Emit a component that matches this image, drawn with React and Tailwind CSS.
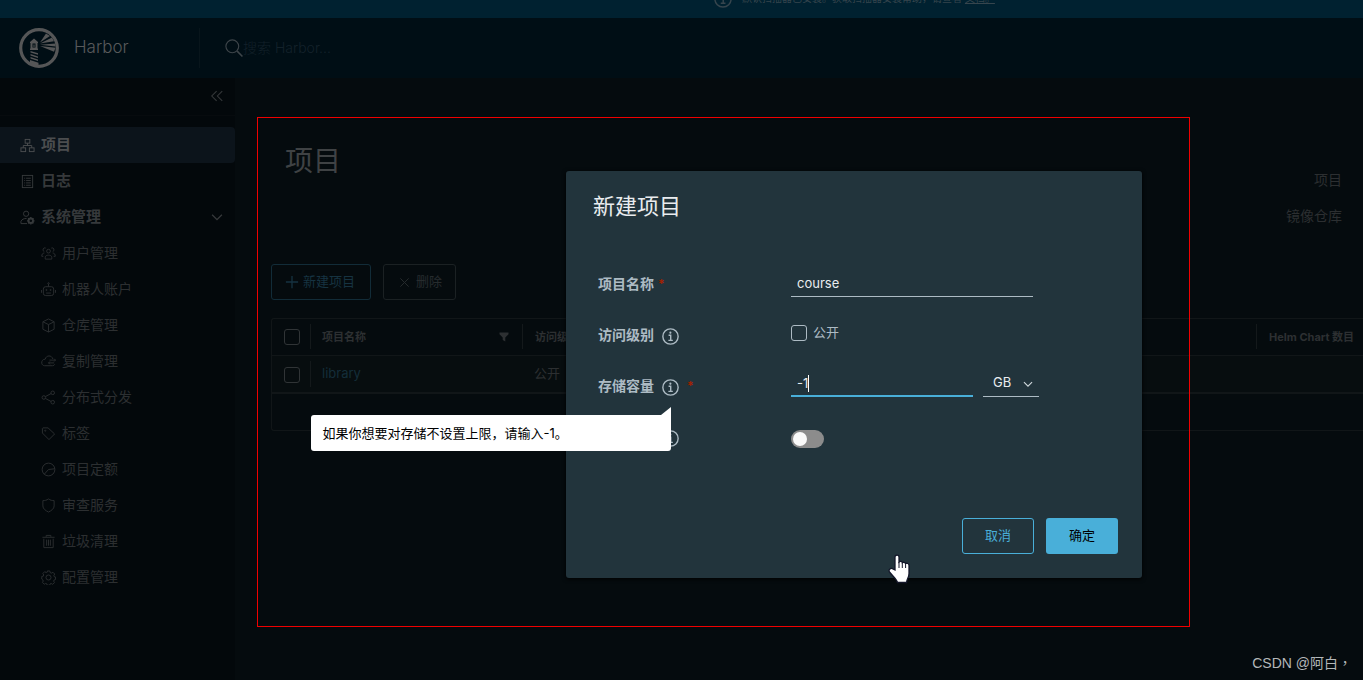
import React, { useState } from "react";

const ICONS = {
    info: (
        <>
            <circle cx="8" cy="8" r="7.2" strokeWidth="1.3" />
            <path d="M6.2 6.8h2v4.8M6 11.7h4.2" strokeWidth="1.3" />
            <circle cx="7.9" cy="4.4" r="0.5" fill="currentColor" />
        </>
    ),
    projects: (
        <>
            <rect x="5.5" y="1.5" width="5" height="4" />
            <rect x="1" y="10.5" width="5" height="4" />
            <rect x="10" y="10.5" width="5" height="4" />
            <path d="M8 5.5v2.5M3.5 10.5V8h9v2.5" />
        </>
    ),
    logs: (
        <>
            <rect x="2.5" y="1.5" width="11" height="13" />
            <path d="M4.5 4.5h1M6.500 4.500h5M4.500 7h1M6.500 7h5M4.500 9.500h1M6.500 9.500h5M4.500 12h1M6.500 12h5" />
        </>
    ),
    admin: (
        <>
            <circle cx="6.5" cy="4" r="2.8" />
            <path d="M7.5 14.5H1V12c1-2 3-3 6-3" />
            <circle cx="11.5" cy="11.5" r="2.4" strokeWidth="2" />
            <path d="M11.5 7.500v1.500M11.500 14v1.500M7.500 11.500H9M14 11.500h1.500M8.700 8.700l1 1M13.300 13.300l1 1M14.300 8.700l-1 1M9.700 13.300l-1 1" strokeWidth="1.4" />
        </>
    ),
    users: (
        <>
            <circle cx="8" cy="5.500" r="2" />
            <path d="M4.500 14v-2c0-3 7-3 7 0v2z" />
            <path d="M5 2.200a2 2 0 1 0-1.500 3.700M11 2.200a2 2 0 1 1 1.500 3.700M3.500 7.500C1.500 7.500.8 9 .8 11H2.500M12.500 7.500c2 0 2.700 1.500 2.700 3.500H13.500" />
        </>
    ),
    robot: (
        <>
            <rect x="2.5" y="5" width="11" height="9.500" rx="2.500" />
            <path d="M8 5V2M.5 8.500v3M15.500 8.500v3M5.500 11.800h5" />
            <circle cx="8" cy="1.500" r="0.800" />
            <circle cx="5.800" cy="8.500" r="0.600" />
            <circle cx="10.200" cy="8.500" r="0.600" />
        </>
    ),
    registry: <path d="M8 1l6 3v8l-6 3-6-3V4zM2 4l6 3 6-3M8 7v8" />,
    replication: (
        <>
            <path d="M12.500 5.200C11.500 1 5.500 1 4.500 5.500 1.500 5.500.5 8 .8 9.800c.3 1.700 1.500 2.700 3 2.700h8.500c1.200 0 2-.7 2.300-1.500" />
            <path d="M9 6.500h6.500M14 5l1.500 1.500L14 8M14 9.500H8M9.500 8L8 9.500 9.500 11" />
        </>
    ),
    distribution: (
        <>
            <circle cx="3" cy="8" r="1.900" />
            <circle cx="12.500" cy="3" r="1.900" />
            <circle cx="12.500" cy="13" r="1.900" />
            <path d="M4.700 7l6-3.200M4.700 9l6 3.200" />
        </>
    ),
    tag: (
        <>
            <path d="M1.500 2.500v5l7 7 6-6-7-6.500H2z" />
            <circle cx="4.500" cy="5" r="0.600" />
        </>
    ),
    quota: (
        <>
            <circle cx="8" cy="8" r="6.800" />
            <path d="M3.500 13L8 8l6.800-.8" />
        </>
    ),
    shield: <path d="M8 1c2 1.500 4 1.800 6 1.800v5.700c0 3-3 5-6 6.500-3-1.500-6-3.500-6-6.500V2.800C4 2.800 6 2.500 8 1z" />,
    trash: <path d="M1.500 3.500h13M5.500 3V1.500h5V3M3 5v9.500h10V5M6 6v6.500M8 6v6.500M10 6v6.500" />,
    config: (
        <>
            <circle cx="8" cy="8" r="2.700" />
            <path d="M6.700 1h2.600l.5 1.800 1.300.5 1.600-.9 1.900 1.900-.9 1.600.5 1.300 1.300.3v2.600l-1.500.5-.5 1.300.9 1.500-1.900 1.900-1.600-.9-1.300.5-.4 1.400H6.700l-.5-1.500-1.300-.5-1.500.9-1.900-1.900.9-1.500-.5-1.300L.8 9.700V6.900l1.600-.3.5-1.300-.9-1.600 1.900-1.900 1.600.9 1.300-.5z" />
        </>
    ),
    angle: <path d="M1.500 5L8 11.500 14.500 5" strokeWidth="1.800" />,
    collapse: <path d="M7.500 1.500L1 8l6.500 6.500M15 1.500L8.500 8l6.500 6.500" strokeWidth="1.400" />,
    search: (
        <>
            <circle cx="6.500" cy="6.500" r="5.700" />
            <path d="M10.800 10.800L15.500 15.500" strokeWidth="1.400" />
        </>
    ),
    plus: <path d="M8 1v14M1 8h14" strokeWidth="1.500" />,
    times: <path d="M2 2l12 12M14 2L2 14" strokeWidth="1.400" />,
};

function Icon({ name, className }) {
    return (
        <svg
            viewBox="0 0 16 16"
            fill="none"
            stroke="currentColor"
            strokeWidth="1"
            aria-hidden="true"
            className={`shrink-0 ${className}`}
        >
            {ICONS[name]}
        </svg>
    );
}

function Logo() {
    return (
        <svg viewBox="0 0 40 40" className="size-10 shrink-0 text-[#555657]" fill="currentColor" aria-hidden="true">
            <circle cx="20" cy="20" r="18.300" fill="none" stroke="currentColor" strokeWidth="3.200" />
            <path d="M15 10.500l4 3.500v1h-.5v5.500h.5v1.500h-8v-1.500h.5V15H11v-1zM13.500 15.500v4h3v-4z" fillRule="evenodd" />
            <path d="M14.500 16.500h1V19h-1z" />
            <path d="M11.500 23l7.500 2.300v1.500l-7.500-2.300zM11.500 26l7.500 2.400v1.500l-7.500-2.400zM11.500 29l7.500 2.500V33l-7.500-2.500zM11 32l8.500 2.700V38L11 35.500z" />
            <path d="M21 14.500L27 5.500l4 2.500zM21 15.500l12-6 2 3.700zM21 16.800l15.500-1.300v3zM21 18l15.500 1.800-1.500 4z" />
        </svg>
    );
}

const SUB_ITEMS = [
    { icon: "users", label: "用户管理" },
    { icon: "robot", label: "机器人账户" },
    { icon: "registry", label: "仓库管理" },
    { icon: "replication", label: "复制管理" },
    { icon: "distribution", label: "分布式分发" },
    { icon: "tag", label: "标签" },
    { icon: "quota", label: "项目定额" },
    { icon: "shield", label: "审查服务" },
    { icon: "trash", label: "垃圾清理" },
    { icon: "config", label: "配置管理" },
];

function Sidebar() {
    return (
        <nav className="w-[235px] shrink-0 bg-[#03080b] text-[#36393b]">
            <div className="flex h-[38px] items-center justify-end border-b border-[#070b0e] pb-0.5 pr-3">
                <button type="button" aria-label="收起">
                    <Icon name="collapse" className="size-3" />
                </button>
            </div>
            <ul className="pt-[11px]">
                <li>
                    <a href="#projects" className="flex h-9 items-center gap-1.5 rounded-r bg-[#0c141b] pl-5 text-[15px] font-bold text-[#4b4d4f]">
                        <Icon name="projects" className="size-[15px]" />
                        项目
                    </a>
                </li>
                <li>
                    <a href="#logs" className="flex h-9 items-center gap-1.5 pl-5 text-[15px] font-bold">
                        <Icon name="logs" className="size-[15px]" />
                        日志
                    </a>
                </li>
                <li>
                    <button type="button" className="flex h-9 w-full items-center gap-1.5 pl-5 pr-3 text-[15px] font-bold">
                        <Icon name="admin" className="size-[15px]" />
                        系统管理
                        <Icon name="angle" className="ml-auto size-3" />
                    </button>
                    <ul>
                        {SUB_ITEMS.map((item) => (
                            <li key={item.icon}>
                                <a href={`#${item.icon}`} className="flex h-9 items-center gap-1.5 pl-[41px] text-sm text-[#2c2f31]">
                                    <Icon name={item.icon} className="size-[15px]" />
                                    {item.label}
                                </a>
                            </li>
                        ))}
                    </ul>
                </li>
            </ul>
        </nav>
    );
}

function Checkbox({ id, label, className }) {
    return (
        <input
            type="checkbox"
            id={id}
            aria-label={label}
            className={`block size-4 shrink-0 appearance-none rounded-[3px] border ${className}`}
        />
    );
}

function ProjectTable() {
    return (
        <div className="mt-[18px] h-[113px] rounded-l-[3px] border-y border-l border-[#111618]">
            <table className="w-full table-fixed border-collapse text-left">
                <thead>
                    <tr className="h-9 border-b border-[#111618] text-[11px] font-bold text-[#2d3032]">
                        <th className="w-[38px] pl-3">
                            <Checkbox label="全选" className="border-[#303436]" />
                        </th>
                        <th className="w-[212px]">
                            <div className="flex h-[25px] items-center justify-between border-l border-[#14191b] pl-[11px] pr-[13px]">
                                项目名称
                                <svg viewBox="0 0 10 10" className="size-[10px]" fill="currentColor" aria-hidden="true">
                                    <path d="M.5.5h9v1.700L6.300 5.500V9.500L3.700 8V5.500L.5 2.200z" />
                                </svg>
                            </div>
                        </th>
                        <th>
                            <div className="flex h-[25px] items-center border-l border-[#14191b] pl-3">访问级别</div>
                        </th>
                        <th className="w-[107px]">
                            <div className="flex h-[25px] items-center whitespace-nowrap border-l border-[#14191b] pl-3">Helm Chart 数目</div>
                        </th>
                    </tr>
                </thead>
                <tbody>
                    <tr className="h-[38px] border-b-2 border-[#111618] bg-[#070d0f] text-[13px] text-[#2c2f31]">
                        <td className="pl-3 pt-0.5">
                            <Checkbox label="选择 library" className="border-[#303436]" />
                        </td>
                        <td>
                            <div className="flex h-[26px] items-center border-l border-[#14191b] pl-[11px]">
                                <a href="#library" className="text-[#142e3a]">library</a>
                            </div>
                        </td>
                        <td className="pl-3">公开</td>
                        <td />
                    </tr>
                </tbody>
            </table>
        </div>
    );
}

function FormRow({ label, htmlFor, info, required, tooltip, children }) {
    return (
        <div className="flex h-[51px] items-center">
            <div className="flex w-[193px] shrink-0 items-center text-sm font-bold text-[#adbbc4]">
                <label htmlFor={htmlFor}>{label}</label>
                {info && (
                    <span className="relative ml-2 mt-1">
                        <Icon name="info" className="size-[17px]" />
                        {tooltip && (
                            <span role="tooltip" className="absolute right-1/2 top-9 z-10 flex h-9 w-[360px] items-center rounded-[3px] rounded-tr-none bg-white pl-3 text-[13px] font-normal text-black">
                                {tooltip}
                                <svg viewBox="0 0 10 8" className="absolute bottom-full right-0 h-2 w-2.5" fill="#fff" aria-hidden="true">
                                    <path d="M0 8L10 0v8z" />
                                </svg>
                            </span>
                        )}
                    </span>
                )}
                {required && <span className={info ? "ml-2 text-xs text-[#a32100]" : "ml-1 text-xs text-[#a32100]"}>*</span>}
            </div>
            {children}
        </div>
    );
}

function NewProjectDialog() {
    const [name, setName] = useState("course");
    const [limit, setLimit] = useState("-1");

    return (
        <form
            role="dialog"
            aria-labelledby="dialog-title"
            onSubmit={(e) => e.preventDefault()}
            className="w-[576px] rounded-[3px] bg-[#22343c] pb-6 pt-[19px] shadow-[0_1px_4px_#000]"
        >
            <h2 id="dialog-title" className="pl-[27px] text-[22px] leading-8 text-[#e9ecef]">新建项目</h2>

            <div className="pl-8 pt-9">
                <FormRow label="项目名称" htmlFor="name" required>
                    <input
                        id="name"
                        type="text"
                        value={name}
                        onChange={(e) => setName(e.target.value)}
                        className="h-[26px] w-[242px] border-b border-[#adbbc4] px-1.5 text-[13px] text-[#e9ecef] outline-none"
                    />
                </FormRow>

                <FormRow label="访问级别" htmlFor="public" info>
                    <div className="mb-1 flex items-center gap-1.5">
                        <Checkbox id="public" className="border-[#adbbc4]" />
                        <label htmlFor="public" className="text-[13px] text-[#adbbc4]">公开</label>
                    </div>
                </FormRow>

                <FormRow label="存储容量" htmlFor="limit" info required tooltip="如果你想要对存储不设置上限，请输入-1。">
                    <div className="relative mb-1">
                        <input
                            id="limit"
                            type="text"
                            value={limit}
                            onChange={(e) => setLimit(e.target.value)}
                            className="block h-[26px] w-[182px] border-b-2 border-[#49afd9] px-1.5 text-[13px] text-[#e9ecef] caret-transparent outline-none"
                        />
                        {/* cursor de texto */}
                        <span className="absolute left-[17px] top-1 h-[17px] w-px bg-white" />
                    </div>
                    <div className="relative mb-1 ml-2.5">
                        <select aria-label="单位" className="block h-[26px] w-14 appearance-none border-b border-[#adbbc4] pl-2.5 text-[13px] text-[#e9ecef]">
                            <option>GB</option>
                            <option>MB</option>
                            <option>TB</option>
                        </select>
                        <Icon name="angle" className="pointer-events-none absolute right-1.5 top-2 size-2.5 text-[#d0d8dc]" />
                    </div>
                </FormRow>

                <FormRow label="镜像代理" htmlFor="proxy" info>
                    <input
                        id="proxy"
                        type="checkbox"
                        role="switch"
                        className="mt-1 flex h-[18px] w-[33px] appearance-none items-center rounded-full bg-[#8c8c8c] pl-0.5 before:size-[14px] before:rounded-full before:bg-[#fafafa]"
                    />
                </FormRow>
            </div>

            <div className="mt-14 flex justify-end gap-3 pr-6 text-[13px]">
                <button type="button" className="h-9 w-[72px] rounded-[3px] border border-[#49afd9] text-[#49afd9]">取消</button>
                <button type="submit" className="h-9 w-[72px] rounded-[3px] bg-[#49afd9] text-black">确定</button>
            </div>
        </form>
    );
}

export default function App() {
    return (
        <div className="relative flex min-h-screen flex-col overflow-hidden bg-[#050b0e] font-[Inter,'Noto_Sans_CJK_SC',sans-serif]">
            <div className="flex h-[18px] items-end justify-center overflow-hidden bg-[#002130] pb-2.5 pl-[346px] text-[#36454d]">
                <Icon name="info" className="size-[18px]" />
                <p className="mb-0.5 ml-2.5 whitespace-nowrap text-[10px] leading-4">
                    默认扫描器已安装。获取扫描器安装帮助，请查看 <a href="#docs" className="underline">文档。</a>
                </p>
            </div>

            <header className="flex h-[60px] items-center bg-[#000e15]">
                <a href="#home" className="flex w-[199px] items-center gap-[15px] pl-[19px] text-[17px] font-light text-[#58595b]">
                    <Logo />
                    Harbor
                </a>
                <label className="flex h-10 flex-1 items-center border-l border-[#08151b] pl-[25px] text-[#3d454a]">
                    <Icon name="search" className="size-[18px]" />
                    <input
                        type="search"
                        aria-label="搜索"
                        placeholder="搜索 Harbor..."
                        className="w-60 text-sm font-light outline-none placeholder:text-[#13212a]"
                    />
                </label>
            </header>

            <div className="flex flex-1">
                <Sidebar />

                <main className="min-w-0 flex-1 pl-9">
                    <div className="flex h-[186px] justify-between pl-3.5 pr-[21px]">
                        <h1 className="mt-[63px] text-[28px] leading-10 text-[#3f4244]">项目</h1>
                        <ul className="mt-[84px] text-right text-sm leading-9 text-[#2c2f31]">
                            <li>项目</li>
                            <li>镜像仓库</li>
                        </ul>
                    </div>

                    <div className="flex gap-3 text-[13px]">
                        <button type="button" className="flex h-9 w-[100px] items-center gap-1 rounded-[3px] border border-[#122c38] pl-[13px] text-[#163341]">
                            <Icon name="plus" className="size-3.5" />
                            新建项目
                        </button>
                        <button type="button" className="flex h-9 w-[73px] items-center gap-1.5 rounded-[3px] border border-[#1b2123] pl-[15px] text-[#272c2e]">
                            <Icon name="times" className="size-[11px]" />
                            删除
                        </button>
                    </div>

                    <ProjectTable />
                </main>
            </div>

            <div className="pointer-events-none absolute left-[257px] top-[117px] h-[510px] w-[933px] border border-[#f00000]" />

            <div className="absolute inset-0 flex items-start justify-center pl-[345px] pt-[171px]">
                <NewProjectDialog />
            </div>

            <svg viewBox="0 0 22 30" className="pointer-events-none absolute left-[888px] top-[554px] h-[30px] w-[22px]" aria-hidden="true">
                <path
                    d="M7 16V3c0-2.400 4-2.400 4 0v5c1-1 3-.8 3.300.7 1-.8 2.800-.4 3.200.8 1.500-.6 3.500 0 3.500 2v8c0 4-2 5-2.500 9H9.500C9 25.500 5 22.500 1.500 18c-1.500-2.500 1.500-4.500 3.500-3z"
                    fill="#fff"
                    stroke="#14172a"
                    strokeWidth="1.300"
                />
                <path d="M11 8v6M14.300 9v5M17.600 10v4" stroke="#14172a" strokeWidth="1" />
            </svg>

            <p className="absolute bottom-[7px] right-[11px] font-['Liberation_Sans','Noto_Sans_CJK_TC',sans-serif] text-sm leading-5 text-[#b4b7b9]">CSDN @阿白，</p>
        </div>
    );
}
